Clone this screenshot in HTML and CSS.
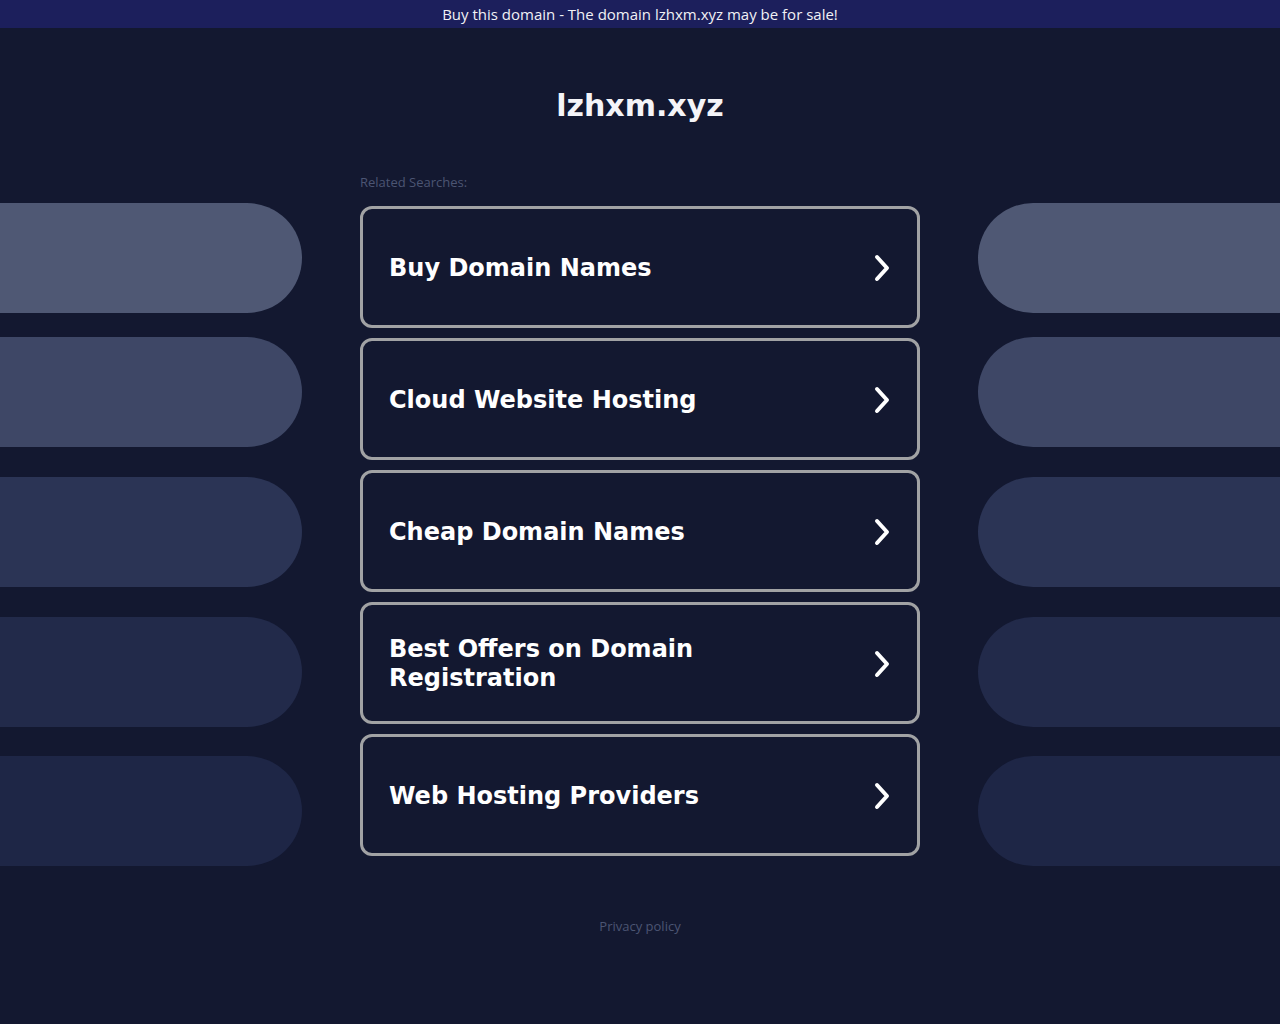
FILE: index.html
```html
<!DOCTYPE html>
<html lang="en">
<head>
    <meta charset="UTF-8">
    <meta name="viewport" content="width=device-width, initial-scale=1.0">
    <title>lzhxm.xyz</title>
    <link rel="stylesheet" href="styles.css">
</head>
<body>

<!-- Sale banner -->
<div class="banner">
    <a href="#buy">Buy this domain - The domain lzhxm.xyz may be for sale!</a>
</div>

<div class="page">
    <h1 class="domain">lzhxm.xyz</h1>

    <div class="layout">
        <!-- Left decoration -->
        <div class="pills pills-left">
            <div class="pill pill-1"></div>
            <div class="pill pill-2"></div>
            <div class="pill pill-3"></div>
            <div class="pill pill-4"></div>
            <div class="pill pill-5"></div>
        </div>

        <!-- Related searches -->
        <div class="searches">
            <div class="searches-label">Related Searches:</div>
            <a class="search-card" href="#1">
                <span>Buy Domain Names</span>
                <svg class="chevron" viewBox="0 0 20 30" width="20" height="30"><polyline points="5,4 15,15 5,26"/></svg>
            </a>
            <a class="search-card" href="#2">
                <span>Cloud Website Hosting</span>
                <svg class="chevron" viewBox="0 0 20 30" width="20" height="30"><polyline points="5,4 15,15 5,26"/></svg>
            </a>
            <a class="search-card" href="#3">
                <span>Cheap Domain Names</span>
                <svg class="chevron" viewBox="0 0 20 30" width="20" height="30"><polyline points="5,4 15,15 5,26"/></svg>
            </a>
            <a class="search-card" href="#4">
                <span>Best Offers on Domain Registration</span>
                <svg class="chevron" viewBox="0 0 20 30" width="20" height="30"><polyline points="5,4 15,15 5,26"/></svg>
            </a>
            <a class="search-card" href="#5">
                <span>Web Hosting Providers</span>
                <svg class="chevron" viewBox="0 0 20 30" width="20" height="30"><polyline points="5,4 15,15 5,26"/></svg>
            </a>
        </div>

        <!-- Right decoration -->
        <div class="pills pills-right">
            <div class="pill pill-1"></div>
            <div class="pill pill-2"></div>
            <div class="pill pill-3"></div>
            <div class="pill pill-4"></div>
            <div class="pill pill-5"></div>
        </div>
    </div>

    <div class="footer">
        <a href="#privacy">Privacy policy</a>
    </div>
</div>

</body>
</html>
```

FILE: styles.css
```css
body {
    margin: 0;
    background-color: #131830;
    font-family: "DejaVu Sans", sans-serif;
    color: white;
}

/* Banner */
.banner {
    height: 28px;
    line-height: 28px;
    background-color: #1c1f5c;
    text-align: center;
    font-family: "Open Sans", sans-serif;
    font-size: 15px;
}

.banner a {
    color: #f1f1f5;
    text-decoration: none;
}

/* Title */
.domain {
    margin: 0;
    padding-top: 59px;
    height: 38px;
    line-height: 38px;
    text-align: center;
    font-size: 30px;
    font-weight: bold;
    color: #f4f4f8;
}

/* Three columns */
.layout {
    display: grid;
    grid-template-columns: 302px 560px 302px;
    column-gap: 58px;
    margin-top: 48px;
}

.pills {
    display: flex;
    flex-direction: column;
    padding-top: 30px;
}

.pill {
    height: 110px;
    margin-bottom: 29px;
}

.pill-1 { background-color: #4f5874; margin-bottom: 24px; }
.pill-2 { background-color: #3e4766; margin-bottom: 30px; }
.pill-3 { background-color: #2b3455; margin-bottom: 30px; }
.pill-4 { background-color: #222a4a; }
.pill-5 { background-color: #1e2646; margin-bottom: 0; }

.pills-left .pill {
    border-radius: 0 55px 55px 0;
}

.pills-right .pill {
    border-radius: 55px 0 0 55px;
}

/* Search cards */
.searches-label {
    height: 33px;
    font-family: "Open Sans", sans-serif;
    font-size: 13px;
    line-height: 18px;
    color: #4c5573;
}

.search-card {
    display: flex;
    align-items: center;
    justify-content: space-between;
    box-sizing: border-box;
    height: 122px;
    margin-bottom: 10px;
    padding: 2px 25px 0 26px;
    border: 3px solid #a1a2a4;
    border-radius: 12px;
    color: white;
    text-decoration: none;
    font-size: 24px;
    font-weight: bold;
    line-height: 29px;
}

.search-card span {
    max-width: 380px;
}

.chevron {
    flex-shrink: 0;
    fill: none;
    stroke: white;
    stroke-width: 4;
    stroke-linecap: round;
    stroke-linejoin: round;
}

/* Footer */
.footer {
    margin-top: 51px;
    text-align: center;
    font-family: "Open Sans", sans-serif;
    font-size: 13px;
}

.footer a {
    color: #4c5573;
    text-decoration: none;
}
```
